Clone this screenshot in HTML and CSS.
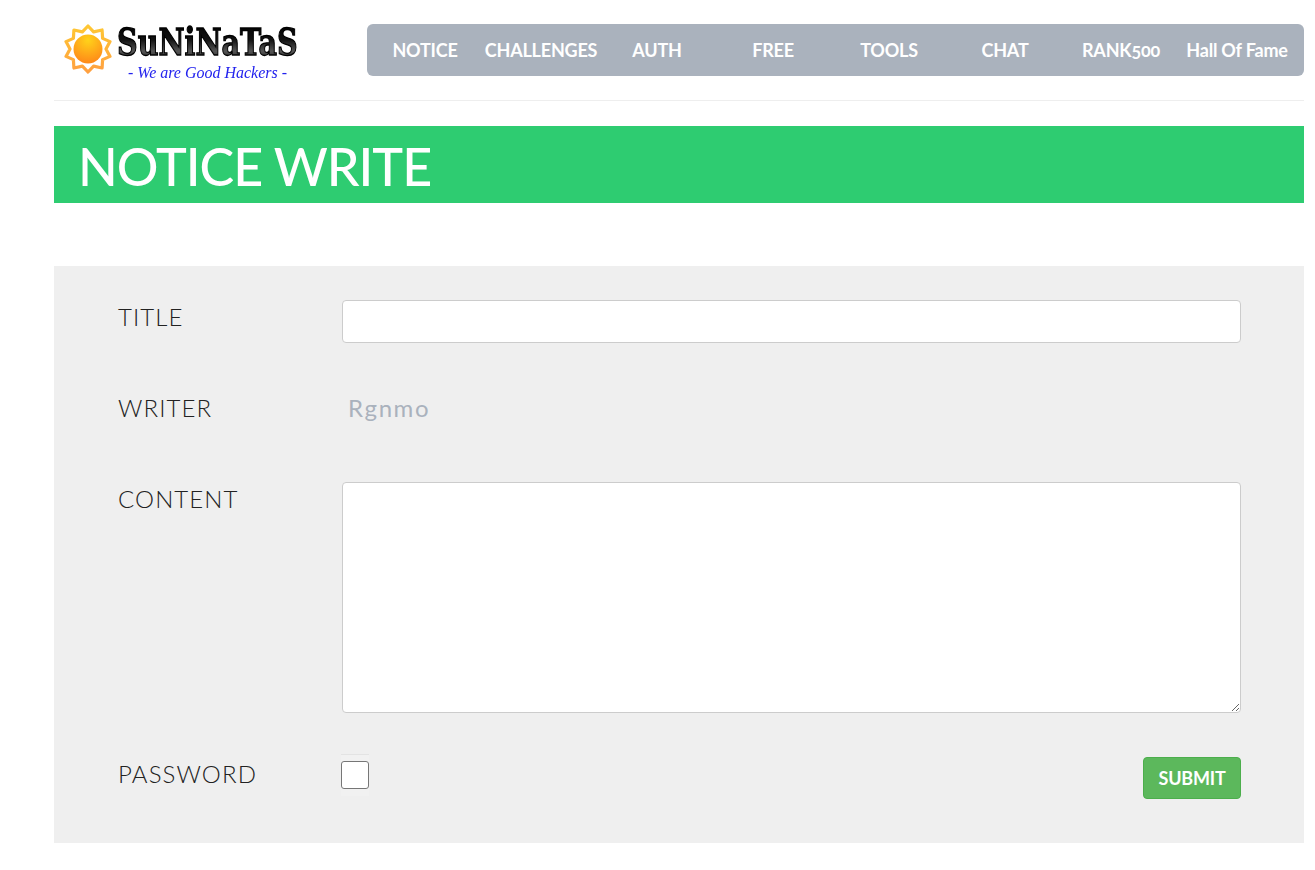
FILE: index.html
```html
<!DOCTYPE html>
<html lang="en">
<head>
<meta charset="utf-8">
<title>SuNiNaTaS - Notice Write</title>
<link rel="stylesheet" href="styles.css">
</head>
<body>
<div class="page">
  <header class="site-header">
    <a class="logo" href="#">
      <svg viewBox="0 0 260 64" width="260" height="64" aria-label="SuNiNaTaS logo">
        <defs>
          <radialGradient id="sunCore" cx="50%" cy="20%" r="85%">
            <stop offset="0" stop-color="#ffd21a"/>
            <stop offset="1" stop-color="#ff8418"/>
          </radialGradient>
          <linearGradient id="rayFill" x1="0" y1="0" x2="0" y2="1">
            <stop offset="0" stop-color="#ffc733"/>
            <stop offset="1" stop-color="#ffa040"/>
          </linearGradient>
          <linearGradient id="metal" x1="0" y1="0" x2="0" y2="1">
            <stop offset="0" stop-color="#000"/>
            <stop offset=".45" stop-color="#111"/>
            <stop offset=".72" stop-color="#555"/>
            <stop offset="1" stop-color="#111"/>
          </linearGradient>
        </defs>
        <polygon class="sun-rays" stroke="url(#rayFill)" points="34,6 39.6,11.9 48.1,10 48.6,18.4 56,21.6 52,29 56,36.4 48.6,39.6 48.1,48 39.6,46.1 34,52 28.4,46.1 19.9,48 19.4,39.6 12,36.4 16,29 12,21.6 19.4,18.4 19.9,10 28.4,11.9"/>
        <circle cx="34" cy="29" r="14.5" fill="url(#sunCore)"/>
        <text class="logo-name" transform="translate(63 34.5) scale(.773 1)" fill="url(#metal)">SuNiNaTaS</text>
        <text class="logo-tag" transform="translate(74 58) scale(1 1.1)">- We are Good Hackers -</text>
      </svg>
    </a>
    <nav class="main-nav">
      <a href="#">NOTICE</a>
      <a href="#">CHALLENGES</a>
      <a href="#">AUTH</a>
      <a href="#">FREE</a>
      <a href="#">TOOLS</a>
      <a href="#">CHAT</a>
      <a href="#">RANK500</a>
      <a href="#">Hall Of Fame</a>
    </nav>
  </header>

  <h1 class="page-title">NOTICE WRITE</h1>

  <form class="write-form">
    <div class="row row-title">
      <label class="label" for="title">TITLE</label>
      <input class="field" id="title" type="text">
    </div>
    <div class="row row-writer">
      <span class="label">WRITER</span>
      <span class="writer-name">Rgnmo</span>
    </div>
    <div class="row row-content">
      <label class="label" for="content">CONTENT</label>
      <textarea class="field area" id="content"></textarea>
    </div>
    <div class="row row-password">
      <label class="label" for="pw">PASSWORD</label>
      <div class="password-line">
        <span class="check-wrap"><input class="check" id="pw" type="checkbox"></span>
        <button class="submit" type="button">SUBMIT</button>
      </div>
    </div>
  </form>
</div>
</body>
</html>
```
FILE: styles.css
```css
* { box-sizing: border-box; }

html, body {
  margin: 0;
  background: #fff;
}

body {
  font-family: "Lato", "Open Sans", "Liberation Sans", sans-serif;
  color: #333;
}

.page {
  padding: 0 11px 0 54px;
  min-height: 870px;
}

.site-header {
  display: flex;
  align-items: flex-start;
  height: 101px;
  padding-top: 20px;
  border-bottom: 1px solid #eee;
}

.logo {
  display: block;
  flex: 0 0 313px;
  height: 64px;
}

.logo svg {
  display: block;
  filter: blur(.35px);
}

.sun-rays {
  fill: none;
  stroke-width: 3.2px;
  stroke-linejoin: round;
}

.logo-name {
  font-family: "DejaVu Serif", serif;
  font-weight: 700;
  font-size: 37px;
  stroke: #000;
  stroke-width: 1.3px;
}

.logo-tag {
  font-family: "Liberation Serif", serif;
  font-style: italic;
  font-size: 16px;
  fill: #2222ee;
}

.main-nav {
  flex: 1;
  display: grid;
  grid-template-columns: repeat(8, 116px);
  height: 52px;
  margin-top: 4px;
  background: #aab2bd;
  border-radius: 6px;
}

.main-nav a {
  display: flex;
  align-items: center;
  justify-content: center;
  color: #fff;
  font-size: 18px;
  font-weight: 700;
  letter-spacing: -.2px;
  font-variant-numeric: oldstyle-nums;
  text-decoration: none;
  white-space: nowrap;
}

.page-title {
  margin: 25px 0 0;
  height: 77px;
  padding-left: 24px;
  background: #2ecc71;
  color: #fff;
  font-size: 52px;
  font-weight: 500;
  line-height: 80px;
  letter-spacing: -1px;
}

.write-form {
  margin-top: 63px;
  padding: 34px 63px 44px 64px;
  background: #efefef;
}

.row {
  display: grid;
  grid-template-columns: 224px 1fr;
}

.row-title, .row-writer { margin-bottom: 48px; }
.row-content { margin-bottom: 41px; }

.label {
  font-size: 24px;
  font-weight: 300;
  line-height: 34px;
  letter-spacing: 1.1px;
  color: #222;
}

.field {
  display: block;
  width: 100%;
  height: 43px;
  padding: 6px 12px;
  background: #fff;
  border: 1px solid #ccc;
  border-radius: 4px;
  font: inherit;
}

.area { height: 231px; }

.row-writer { height: 43px; }

.writer-name {
  padding-left: 6px;
  font-size: 24px;
  font-weight: 400;
  line-height: 34px;
  letter-spacing: 1.6px;
  color: #aab2bd;
}

.row-password .label { padding-top: 3px; }

.password-line {
  display: flex;
  justify-content: space-between;
  align-items: flex-start;
}

.check-wrap {
  display: block;
  width: 28px;
  height: 42px;
  margin-left: -1px;
  padding-top: 6px;
  border-top: 1px solid #e3e3e3;
  background: #f1f1f1;
}

.check {
  display: block;
  appearance: none;
  width: 28px;
  height: 28px;
  margin: 0;
  background: #fff;
  border: 1px solid #767676;
  border-radius: 3px;
}

.submit {
  width: 98px;
  height: 42px;
  margin-top: 3px;
  background: #5cb85c;
  border: 1px solid #4cae4c;
  border-radius: 4px;
  color: #fff;
  font-family: inherit;
  font-size: 18px;
  font-weight: 700;
  letter-spacing: -.2px;
}
```
